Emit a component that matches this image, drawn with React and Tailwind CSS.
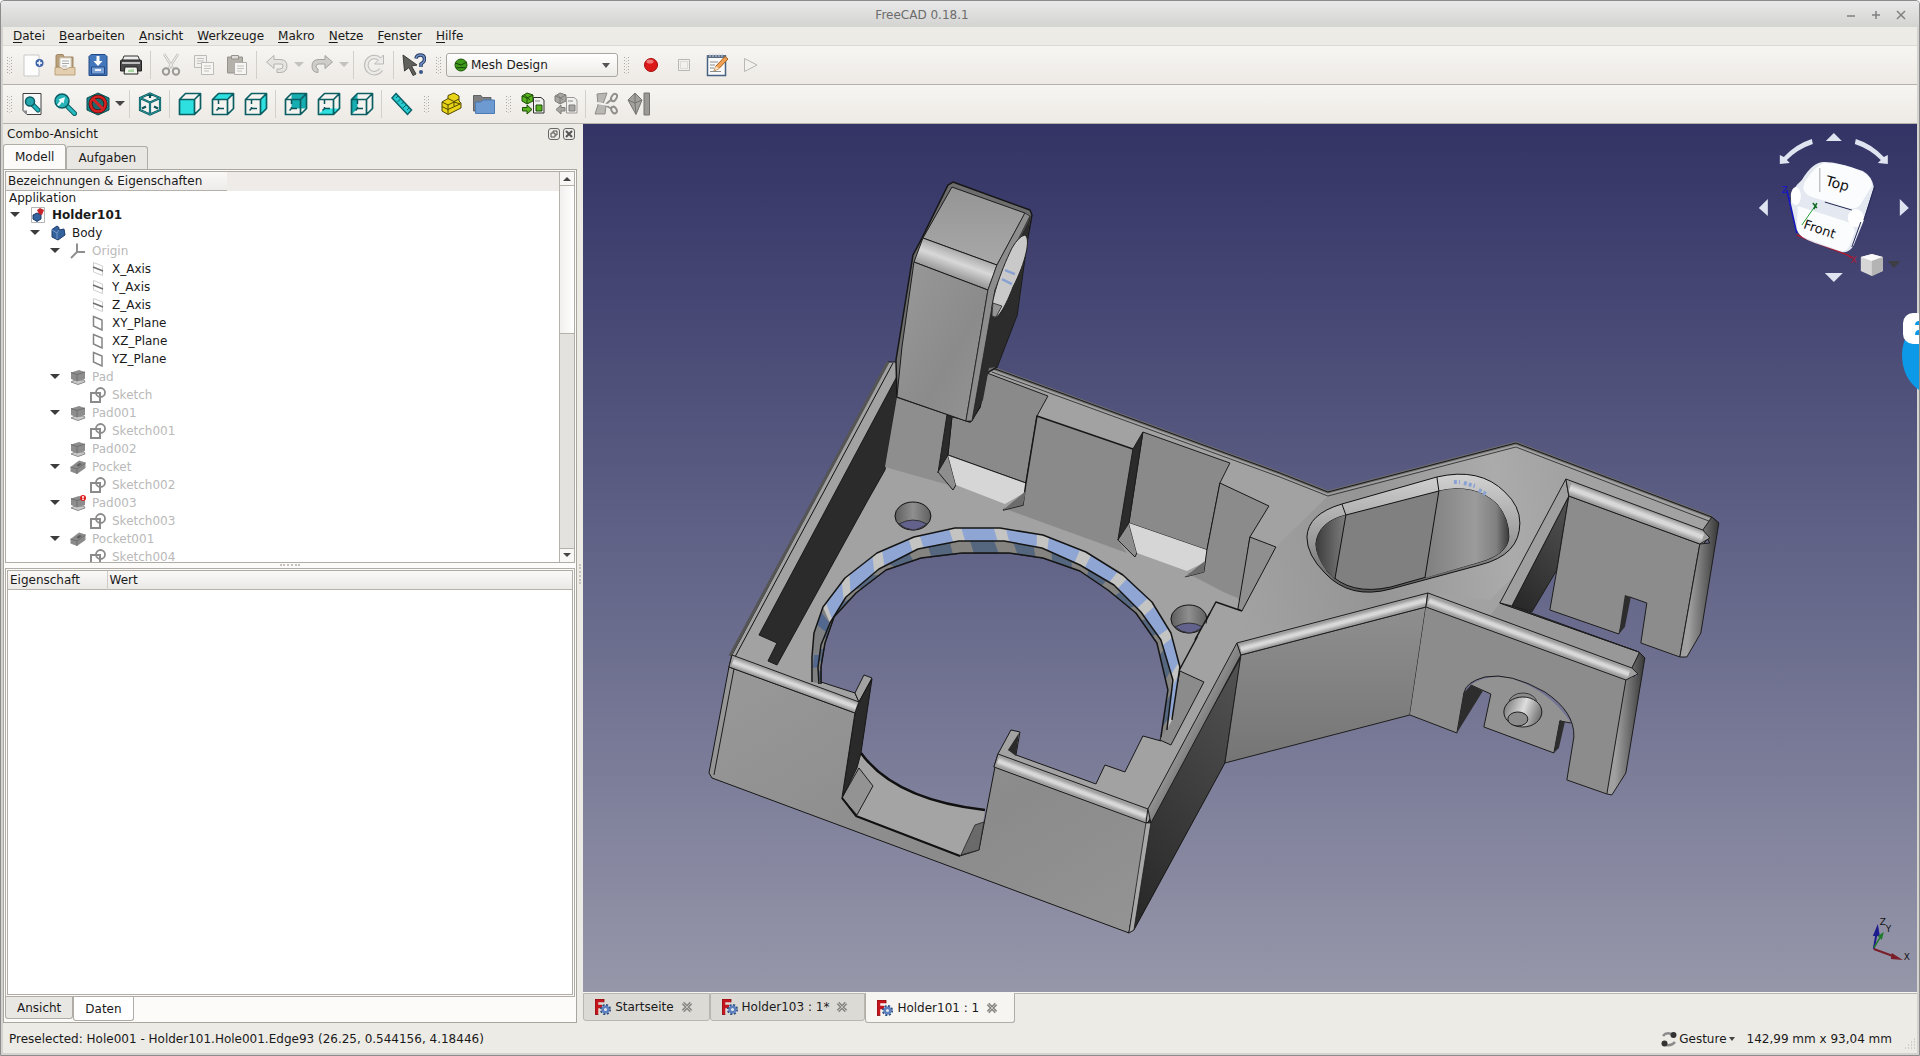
import React, { useState } from "react";

const MENUS = ["Datei", "Bearbeiten", "Ansicht", "Werkzeuge", "Makro", "Netze", "Fenster", "Hilfe"];

const TREE = [
  { level: 0, icon: "doc", label: "Holder101", open: true, bold: true },
  { level: 1, icon: "body", label: "Body", open: true },
  { level: 2, icon: "origin", label: "Origin", open: true, hidden: true },
  { level: 3, icon: "axis", label: "X_Axis" },
  { level: 3, icon: "axis", label: "Y_Axis" },
  { level: 3, icon: "axis", label: "Z_Axis" },
  { level: 3, icon: "plane", label: "XY_Plane" },
  { level: 3, icon: "plane", label: "XZ_Plane" },
  { level: 3, icon: "plane", label: "YZ_Plane" },
  { level: 2, icon: "pad", label: "Pad", open: true, hidden: true },
  { level: 3, icon: "sketch", label: "Sketch", hidden: true },
  { level: 2, icon: "pad", label: "Pad001", open: true, hidden: true },
  { level: 3, icon: "sketch", label: "Sketch001", hidden: true },
  { level: 2, icon: "pad", label: "Pad002", hidden: true },
  { level: 2, icon: "pocket", label: "Pocket", open: true, hidden: true },
  { level: 3, icon: "sketch", label: "Sketch002", hidden: true },
  { level: 2, icon: "padError", label: "Pad003", open: true, hidden: true },
  { level: 3, icon: "sketch", label: "Sketch003", hidden: true },
  { level: 2, icon: "pocket", label: "Pocket001", open: true, hidden: true },
  { level: 3, icon: "sketch", label: "Sketch004", hidden: true },
];

const INDENTS = ["pl-1", "pl-6", "pl-11", "pl-16"];

/* ---------- toolbar icons ---------- */

const Icon = ({ children, size = 24 }) => (
  <svg width={size} height={size} viewBox="0 0 24 24" fill="none" className="shrink-0" aria-hidden="true">
    {children}
  </svg>
);

const NewIcon = () => (
  <Icon>
    <path d="M4 2H19V23H4Z" fill="#fdfdfd" stroke="#c9c9c9" />
    <circle cx="19.500" cy="10" r="4" fill="#3b62a8" />
    <path d="M19.500 7.500V12.500M17 10H22" stroke="#fff" strokeWidth="1.500" />
  </Icon>
);

const OpenIcon = () => (
  <Icon>
    <path d="M3 14V3Q3 1.500 4.500 1.500H10L11 4H20V15Z" fill="#b8a07c" stroke="#9f8561" />
    <path d="M7 5H18V15H7Z" fill="#fafaf8" stroke="#d6d0c4" />
    <path d="M9 8H16M9 10.500H16M9 13H14" stroke="#a9a9a9" />
    <path d="M2 14.500H8L10 16.500H14L16 14.500H22V22H2Z" fill="#e3cfb0" stroke="#bda27b" />
  </Icon>
);

const SaveIcon = () => (
  <Icon>
    <path d="M5 1.500H19L21 3.500V22.500H3V3.500Z" fill="#4376bb" stroke="#234a86" />
    <path d="M5.500 14H18.500V21H5.500Z" fill="#78a0d6" stroke="#234a86" />
    <path d="M9 17H15" stroke="#e8eef7" strokeWidth="2" />
    <path d="M10.500 3H13.500V8H16.500L12 13L7.500 8H10.500Z" fill="#fff" />
  </Icon>
);

const PrintIcon = () => (
  <Icon>
    <path d="M5 3H19L21 8H3Z" fill="#eee" stroke="#333" />
    <path d="M1.500 8Q1.500 7 3 7H21Q22.500 7 22.500 8V18H1.500Z" fill="#4b4b4b" stroke="#222" />
    <path d="M3 9H21V11H3Z" fill="#bdbdbd" />
    <path d="M6 14H18L19 21H5Z" fill="#f1f5ee" stroke="#222" />
    <path d="M9 17L15 16V19H9Z" fill="#a9d6a3" />
  </Icon>
);

const CutIcon = () => (
  <Icon>
    <path d="M5 1L14.500 16M19 1L9.500 16" stroke="#c2c0bc" strokeWidth="2.500" />
    <path d="M5 1L14.500 16M19 1L9.500 16" stroke="#f4f3f1" />
    <circle cx="7" cy="18.500" r="3.200" stroke="#9b9a97" strokeWidth="2" />
    <circle cx="17" cy="18.500" r="3.200" stroke="#9b9a97" strokeWidth="2" />
  </Icon>
);

const CopyIcon = () => (
  <Icon>
    <path d="M2.500 2.500H14.500V14.500H2.500Z" fill="#f2f1ef" stroke="#bdbbb7" />
    <path d="M5 5.500H12M5 8H12M5 10.500H10" stroke="#c4c2be" />
    <path d="M9.500 9.500H21.500V21.500H9.500Z" fill="#f7f6f4" stroke="#bdbbb7" />
    <path d="M12 13H19M12 15.500H19M12 18H17" stroke="#c4c2be" />
  </Icon>
);

const PasteIcon = () => (
  <Icon>
    <path d="M2.500 4H17.500V20H2.500Z" fill="#b4b1ab" stroke="#96938d" />
    <path d="M6.500 2.500H13.500V6H6.500Z" fill="#dedcd8" stroke="#96938d" />
    <path d="M9.500 9.500H21.500V21.500H9.500Z" fill="#f7f6f4" stroke="#b0aeaa" />
    <path d="M12 13H19M12 15.500H19M12 18H17" stroke="#c4c2be" />
  </Icon>
);

const UndoIcon = () => (
  <Icon>
    <path d="M1.500 9L9 2.500V6.500H15Q22 6.500 22 13T15 19.500H12V16H15Q18 16 18 13T15 11H9V15.500Z" fill="#e6e4e1" stroke="#b5b3af" />
  </Icon>
);

const RedoIcon = () => (
  <Icon>
    <path d="M22.500 9L15 2.500V6.500H9Q2 6.500 2 13T8 19.500V16Q6 15 6 13T9 11H15V15.500Z" fill="#cfcdca" stroke="#a5a39f" />
  </Icon>
);

const RefreshIcon = () => (
  <Icon>
    <path d="M19 16.500A8 8 0 1 1 18 6.500" stroke="#bbb9b5" strokeWidth="4.500" />
    <path d="M21.500 2V11H12.500Z" fill="#ecebe9" stroke="#bbb9b5" />
    <path d="M19 16.500A8 8 0 1 1 18 6.500" stroke="#ecebe9" strokeWidth="2.500" />
  </Icon>
);

const WhatsThisIcon = () => (
  <Icon>
    <path d="M14 5.500Q14.500 2 18.500 2T22.500 6.500Q22.500 9 19 11V14" stroke="#27395e" strokeWidth="3.500" />
    <path d="M14 5.500Q14.500 2 18.500 2T22.500 6.500Q22.500 9 19 11V14" stroke="#6d8fc6" strokeWidth="1.500" />
    <circle cx="19" cy="19" r="2" fill="#3b5586" />
    <path d="M1 2L15 12L9.500 13L14 21L11 22.500L7 14.500L2.500 18Z" fill="#60605c" stroke="#3c3c3a" />
  </Icon>
);

const RecordIcon = () => (
  <Icon>
    <circle cx="12" cy="12" r="6.500" fill="#dc1a1a" stroke="#a30d0d" />
    <ellipse cx="11" cy="8.500" rx="3.500" ry="2" fill="#f07b7b" />
  </Icon>
);

const StopIcon = () => (
  <Icon>
    <path d="M6.500 6.500H17.500V17.500H6.500Z" fill="#f3f1ee" stroke="#b9b7b3" />
    <path d="M8.500 8.500H15.500V15.500H8.500Z" stroke="#dddbd7" />
  </Icon>
);

const EditIcon = () => (
  <Icon>
    <path d="M2.500 3H20.500V22.500H2.500Z" fill="#fafafa" stroke="#476182" strokeWidth="1.500" />
    <path d="M2 2H21V5H2Z" fill="#5a6d86" />
    <path d="M5 0.500V4M8 0.500V4M11 0.500V4M14 0.500V4M17 0.500V4" stroke="#c8d0da" />
    <path d="M5 9H13M5 12H10M5 15H9M5 18.500H16" stroke="#8c8c8c" />
    <path d="M9 18L11 13L20 3.500L23 6L14 15.500Z" fill="#efa054" stroke="#a5621f" />
    <path d="M9 18L11 13L14 15.500Z" fill="#f7e2c4" />
  </Icon>
);

const PlayIcon = () => (
  <Icon>
    <path d="M6.500 5.500L19 12L6.500 18.500Z" fill="#f3f1ee" stroke="#b9b7b3" />
  </Icon>
);

const FitAllIcon = () => (
  <Icon>
    <path d="M3 1.500H21V22.500H7L3 18.500Z" fill="#f9f9f9" stroke="#3f3f3f" />
    <path d="M3 18.500H7V22.500Z" fill="#8a8a8a" />
    <path d="M13 13L18 18" stroke="#0b5d63" strokeWidth="5" strokeLinecap="round" />
    <path d="M13 13L18 18" stroke="#21b6bb" strokeWidth="3" strokeLinecap="round" />
    <circle cx="10" cy="9.500" r="4.500" fill="#22a5ab" stroke="#0b5d63" strokeWidth="1.500" />
  </Icon>
);

const FitSelectionIcon = () => (
  <Icon>
    <path d="M14 14L21.500 21.500" stroke="#0b5d63" strokeWidth="5" strokeLinecap="round" />
    <path d="M14 14L21.500 21.500" stroke="#27bcc1" strokeWidth="3" strokeLinecap="round" />
    <circle cx="9" cy="9" r="7" fill="#25b3b8" stroke="#0b5d63" strokeWidth="1.500" />
    <path d="M4 13L7 9L5.500 7.500L12 5L10.500 11.500L9 10L6 14Z" fill="#eafcfc" />
  </Icon>
);

const DrawStyleIcon = () => (
  <Icon>
    <path d="M12 1L23 6V18L12 23L1 18V6Z" fill="#168488" stroke="#0a4d52" />
    <circle cx="12" cy="12" r="7.500" fill="#1a6a70" stroke="#4e0a0a" strokeWidth="4" />
    <circle cx="12" cy="12" r="7.500" stroke="#d42222" strokeWidth="2.500" />
    <path d="M7 7L17 17" stroke="#d42222" strokeWidth="3" />
  </Icon>
);

const IsoIcon = () => (
  <Icon>
    <path d="M12 1.500L22 6V18L12 22.500L2 18V6Z" fill="#f4f3f0" />
    <path d="M12 1.500L22 6V18L12 22.500L2 18V6Z M2 6L12 10.500L22 6M12 10.500V22.500M12 2V6M4 16.500L8 14.500M20 16.500L16 14.500" stroke="#0b5358" strokeWidth="2.200" />
    <path d="M12 1.500L22 6V18L12 22.500L2 18V6Z M2 6L12 10.500L22 6M12 10.500V22.500" stroke="#2fa9ad" strokeWidth="0.800" />
  </Icon>
);

const FACES = {
  front: "M1.500 7.500H16.500V22.500H1.500Z",
  top: "M1.500 7.500L7.500 1.500H22.500L16.500 7.500Z",
  right: "M16.500 7.500L22.500 1.500V16.500L16.500 22.500Z",
  rear: "M7.500 1.500H22.500V16.500H7.500Z",
  bottom: "M1.500 22.500L7.500 16.500H22.500L16.500 22.500Z",
  left: "M1.500 7.500L7.500 1.500V16.500L1.500 22.500Z",
};

const CubeIcon = ({ face }) => (
  <Icon>
    <path d="M1.500 7.500L7.500 1.500H22.500V16.500L16.500 22.500H1.500Z" fill="#f4f3f0" />
    <path d={FACES[face]} fill={face === "left" || face === "rear" ? "#17aeb2" : "#2ee0e0"} />
    {face !== "front" && (
      <path d="M7.500 8V12M7.500 15V16.500L5.500 18.500M8 16.500H13" stroke="#0b5358" strokeWidth="1.500" />
    )}
    <path
      d="M1.500 7.500L7.500 1.500H22.500V16.500L16.500 22.500H1.500ZH16.500V22.500M16.500 7.500L22.500 1.500"
      stroke="#0b5f63"
      strokeWidth="1.700"
      strokeLinejoin="round"
    />
  </Icon>
);

const RulerIcon = () => (
  <Icon>
    <path d="M6 1.500L21.500 18L17.500 22.500L2 6Z" fill="#27cbd0" stroke="#0b6368" strokeWidth="1.500" />
    <path d="M8 4L6 6M10.500 7L7.500 10M13.500 10L11.500 12M16 13L13 16M19 16L17 18" stroke="#0b6368" />
  </Icon>
);

const PartIcon = () => (
  <Icon>
    <path d="M3 10L9 6.500V3.500L15 1L20 4V9L22 11V16L9 22.500L3 19Z" fill="#ead417" stroke="#4f4600" />
    <path d="M3 10L9 13V22M9 13L15 10L21.500 12M9 6.500L15 9.500V14M15 9.500L20 7M3 14.500L9 17.500L21 12" stroke="#4f4600" />
  </Icon>
);

const FolderIcon = () => (
  <Icon>
    <path d="M1.500 19V3.500H9L10.500 5.500H19V19Z" fill="#7d7f80" stroke="#616364" />
    <path d="M3.500 21.500V10H9L11 8H22.500V21.500Z" fill="#6d9bd1" stroke="#4b7ab4" />
  </Icon>
);

const MeshConvertIcon = ({ gray }) => {
  const fill = gray ? "#a9a7a4" : "#58b31e";
  const line = gray ? "#7f7d7a" : "#1d4d0a";
  return (
    <Icon>
      <path d="M1 4L6 1L12 3V9L6 12L1 9Z" fill={fill} stroke={line} />
      <path d="M1 4L6 6L12 3M6 6V12M3 2.500L9 8" stroke={line} />
      <path d="M12.500 5.500H20L23 8V21H12.500Z" fill="#f1f1ef" stroke={gray ? "#9b9997" : "#333"} />
      <path d="M14 9H19" stroke="#888" />
      <path d="M15 13H21V19H15Z" fill={fill} stroke={line} />
      {gray ? (
        <path d="M11 15.500H7V13L2 17.500L7 22V19H11Z" fill={fill} stroke={line} />
      ) : (
        <path d="M1.500 15.500H6V13L11 17.500L6 22V19H1.500Z" fill={fill} stroke={line} />
      )}
    </Icon>
  );
};

const MeshCutIcon = () => (
  <Icon>
    <path d="M3 2L13 1L9 12L12 14L11 22H1L4 13Z" fill="#b9b7b4" stroke="#8f8d8a" />
    <path d="M11 13L18 7M11 13L18 17" stroke="#92908d" strokeWidth="2" />
    <ellipse cx="20" cy="5.500" rx="2.500" ry="4" transform="rotate(30 20 5.500)" stroke="#92908d" strokeWidth="2" />
    <ellipse cx="20" cy="18" rx="2.500" ry="3.500" transform="rotate(-30 20 18)" stroke="#92908d" strokeWidth="2" />
    <path d="M3 11L14 13" stroke="#f2f1ef" strokeWidth="2" />
  </Icon>
);

const MeshPlaneIcon = () => (
  <Icon>
    <path d="M1 8L8 1L15 8L9 22.500Z" fill="#a3a19e" stroke="#757370" />
    <path d="M1 8L8 11L15 8M8 1V11L9 22M1 8" stroke="#757370" />
    <path d="M17 1H22.500V23H17Z" fill="#9b9996" stroke="#757370" />
  </Icon>
);

/* ---------- tree icons ---------- */

const TreeIcon = ({ name }) => (
  <svg width="16" height="16" viewBox="0 0 16 16" fill="none" className="shrink-0" aria-hidden="true">
    {name === "doc" && (
      <>
        <path d="M1.500 0.500H14.500V15.500H1.500Z" fill="#fff" stroke="#b5b5b5" />
        <path d="M3 8L7 6L11 7.500V12L7 14.500L3 12Z" fill="#34639e" stroke="#1d3b66" />
        <path d="M7 3L10 1L14 3L12 8L9 7Z" fill="#c8242b" />
      </>
    )}
    {name === "body" && (
      <>
        <path d="M2 4.500L7 1L9 2.500V5L14 4L15 10L8 15L2 12Z" fill="#33629d" stroke="#1c3c6b" />
        <path d="M2 5L7 8V14M7 8L9 5" stroke="#7197c9" />
      </>
    )}
    {name === "origin" && <path d="M7 0.500V9H15M7 9L1 15" stroke="#8f8f8f" strokeWidth="2" />}
    {name === "axis" && (
      <>
        <path d="M3.500 1.500L12.500 5V14.500L3.500 11Z" stroke="#cfcfcf" />
        <path d="M3 6L13 10" stroke="#6f6f6f" strokeWidth="1.500" />
      </>
    )}
    {name === "plane" && <path d="M3.500 1.500L12 5V15L3.500 11Z" stroke="#858585" strokeWidth="1.500" />}
    {(name === "pad" || name === "padError") && (
      <>
        <path d="M1 13L5 11H14L15 13L8 15.500Z" fill="#c9c9c9" stroke="#8c8c8c" />
        <path d="M1 3.500L9 1L15 3V10L7 12.500L1 10Z" fill="#8d8d8d" />
        <path d="M1 3.500L7 5.500L15 3M7 5.500V12" stroke="#6f6f6f" />
      </>
    )}
    {name === "padError" && (
      <>
        <circle cx="13" cy="3" r="3" fill="#e02020" />
        <path d="M13 1V3.500M13 4V5" stroke="#fff" strokeWidth="1.500" />
      </>
    )}
    {name === "pocket" && (
      <>
        <path d="M0.500 8L9 1.500L15.500 3.500V9L7 15L0.500 12.500Z" fill="#8b8b8b" />
        <path d="M0.500 8L7 10L15.500 4M7 10V15" stroke="#707070" />
        <path d="M6 6.500L9.500 4L12 5L8.500 7.500Z" fill="#5d5d5d" />
      </>
    )}
    {name === "sketch" && (
      <>
        <path d="M1 6H10V15H1Z" stroke="#8b8b8b" strokeWidth="2" />
        <circle cx="10.500" cy="5.500" r="4.500" stroke="#8b8b8b" strokeWidth="1.800" />
      </>
    )}
  </svg>
);

const DocTabIcon = () => (
  <svg width="16" height="16" viewBox="0 0 16 16" fill="none" className="shrink-0" aria-hidden="true">
    <path d="M1.500 0V15.500M0 1.500H9M3 7.500H7" stroke="#c4161c" strokeWidth="3.500" />
    <path d="M0 0H9V3.300M0 0V15.500H3.300" stroke="#7a0d11" strokeWidth="0.800" />
    <circle cx="10.500" cy="10.500" r="4.300" stroke="#2d4c80" strokeWidth="2.500" strokeDasharray="1.900 1.480" />
    <circle cx="10.500" cy="10.500" r="2.800" fill="#dfe5f0" stroke="#5b80bd" strokeWidth="2.500" />
  </svg>
);

const CloseX = () => (
  <svg width="12" height="12" viewBox="0 0 12 12" className="shrink-0" aria-hidden="true">
    <path d="M2 2L10 10M10 2L2 10" stroke="#8b8985" strokeWidth="3.500" />
    <path d="M2 2L10 10M10 2L2 10" stroke="#c3c1bd" strokeWidth="1" />
  </svg>
);

/* ---------- toolbar parts ---------- */

const ToolButton = ({ label, children }) => (
  <button aria-label={label} className="flex h-8 w-[33px] items-center justify-center hover:bg-white">
    {children}
  </button>
);

const Caret = ({ dim, label }) => (
  <button aria-label={label} className="flex h-8 w-3 items-center justify-center">
    <svg width="10" height="6" viewBox="0 0 10 6" aria-hidden="true">
      <path d="M0 0H10L5 5Z" fill={dim ? "#c4c2bd" : "#474747"} />
    </svg>
  </button>
);

const Sep = () => (
  <div className="flex w-[7px] justify-center">
    <div className="h-7 w-px bg-[#d3d0ca]" />
  </div>
);

const Handle = ({ first }) => (
  <div className={first ? "flex w-3 shrink-0 justify-center" : "flex w-4 shrink-0 justify-center"}>
    <svg width="6" height="18" viewBox="0 0 6 18" aria-hidden="true">
      <path d="M1.500 1V18M5.500 1V18" stroke="#aaa8a3" strokeDasharray="1 2" />
      <path d="M3.500 2V18" stroke="#c9c7c2" strokeDasharray="1 2" />
    </svg>
  </div>
);

/* ---------- 3D view ---------- */

// vertices of the ring round the big bore: outer, middle and inner edge
const RING_OUTER = [[812, 682], [812, 657], [814, 633], [823, 607], [845, 578], [877, 553], [914, 537], [955, 528], [1000, 528], [1043, 535], [1086, 552], [1123, 575], [1152, 602], [1171, 633], [1180, 667], [1172, 720]];
const RING_MIDDLE = [[819, 684], [818, 667], [821, 645], [830, 623], [846, 597], [879, 569], [918, 549], [959, 541], [1004, 541], [1042, 548], [1080, 565], [1114, 585], [1141, 612], [1161, 640], [1173, 680], [1167, 730]];
const RING_INNER = [[821, 684], [821, 667], [825, 643], [834, 617], [856, 593], [886, 570], [921, 558], [962, 553], [1009, 553], [1043, 558], [1080, 571], [1108, 590], [1136, 613], [1157, 643], [1168, 690], [1161, 737]];

const toPoints = (list) => list.map((p) => p.join(",")).join(" ");
const between = (a, b, t) => [a[0] + (b[0] - a[0]) * t, a[1] + (b[1] - a[1]) * t];

const RingCells = ({ from, to, start, end, fill }) =>
  from.slice(0, -1).map((p, i) => (
    <polygon
      key={i}
      fill={fill}
      points={toPoints([
        between(p, from[i + 1], start),
        between(p, from[i + 1], end),
        between(to[i], to[i + 1], end),
        between(to[i], to[i + 1], start),
      ])}
    />
  ));

// rounded edge: the strip itself, then a highlight that runs along its middle
const RoundedEdge = ({ strip, middle, width = 4 }) => (
  <>
    <path d={strip} fill="#a0a0a0" />
    <path d={middle} stroke="#b4b4b4" strokeWidth={width * 2} />
    <path d={middle} stroke="#c6c6c6" strokeWidth={width * 1.4} />
    <path d={middle} stroke="#d8d8d8" strokeWidth={width * 0.8} />
    <path d={strip} stroke="#1d1d1d" />
  </>
);

const Model = () => (
  <g strokeLinejoin="round">
    {/* top faces of frame and arms */}
    <path
      d="M888 362L902 362L990 367L1280 473L1328 492L1516 443L1712 517L1719 523L1703 545L1566 496L1512 606L1639 652L1645 658L1632 680L1428 607L1241 655L1148 823L994 767L998 754L1011 730L1020 732L1016 755L1096 784L1105 765L1125 772L1143 736L1161 741L1169 700L1166 667L1157 643L1136 613L1108 590L1080 571L1043 558L1009 553L962 553L921 558L886 570L856 593L834 617L825 643L821 667L821 682L855 693L859 702L855 713L729 667L732 655Z"
      fill="#a2a2a2"
      stroke="#171717"
    />
    <path d="M1330 494L1516 447L1600 480L1530 560L1490 600L1428 593L1240 640L1216 602L1276 547Z" fill="url(#armTop)" />
    <path d="M990 367L1280 473L1328 492L1516 443L1712 517" stroke="#6d6d6d" strokeWidth="3" fill="none" />
    <path d="M990 367L1280 473L1328 492L1516 443L1712 517" stroke="#191919" fill="none" />
    <path d="M992 372L1280 477L1328 496L1516 447L1709 521" stroke="#222" strokeWidth="0.800" fill="none" />
    <path d="M888 362L730 656" stroke="#555" strokeWidth="3" fill="none" />
    <path d="M893 363L735 657" stroke="#111" fill="none" />

    {/* inner left wall */}
    <path d="M902 367L897 397L885 470L868 500L777 665L768 661L777 643L759 635Z" fill="#2b2b2b" stroke="#1a1a1a" />

    {/* back wall with its pockets */}
    <path d="M897 397L947 415L937 473L956 487L885 467Z" fill="#8e8e8e" />
    <path d="M987 373L1048 396L1037 416L1026 483L948 455L952 417L972 421L980 407Z" fill="#8a8a8a" stroke="#1d1d1d" />
    <path d="M947 415L952 417L948 455L938 473Z" fill="#2b2b2b" stroke="#1d1d1d" />
    <path d="M938 472L948 455L956 485L953 490Z" fill="#8e8e8e" stroke="#1d1d1d" />
    <path d="M948 455L1026 483L1024 493L1005 504L956 485Z" fill="#d6d6d6" />
    <path d="M948 455L1026 483" stroke="#1d1d1d" />
    <path d="M1037 416L1133 449L1125 513L1118 540L1127 553L1003 508L1023 505Z" fill="#8a8a8a" />
    <path d="M1003 510L1023 505L1026 483L1037 416L1133 449" stroke="#171717" strokeWidth="1.500" fill="none" />
    <path d="M1026 491L1023 505L1003 510Z" fill="#6c6c6c" />
    <path d="M1143 432L1230 463L1220 483L1207 550L1129 523Z" fill="#8a8a8a" stroke="#1d1d1d" />
    <path d="M1143 432L1133 449L1118 540L1129 523Z" fill="#2b2b2b" stroke="#1d1d1d" />
    <path d="M1118 540L1129 523L1137 553L1135 557Z" fill="#8e8e8e" stroke="#1d1d1d" />
    <path d="M1129 523L1207 550L1205 562L1187 571L1137 553Z" fill="#d6d6d6" />
    <path d="M1220 483L1269 506L1250 537L1239 600L1187 573L1204 572L1207 550Z" fill="#8b8b8b" />
    <path d="M1185 577L1204 572L1207 550L1220 483L1269 506L1250 537L1239 610" stroke="#171717" fill="none" />
    <path d="M1205 561L1204 572L1185 577Z" fill="#6c6c6c" />
    <path d="M1185 577L1238 598L1237 607L1190 590Z" fill="#a2a2a2" />
    <path d="M1250 537L1276 547L1242 611L1238 609Z" fill="#8f8f8f" stroke="#171717" />
    <path d="M1242 611L1216 602L1180 669" stroke="#171717" strokeWidth="1.500" fill="none" />
    <path d="M1180 671L1204 682L1171 745L1160 740L1174 700Z" fill="#8b8b8b" stroke="#171717" />

    {/* ring */}
    <polygon points={toPoints([...RING_OUTER, ...[...RING_MIDDLE].reverse()])} fill="#c4c4c2" />
    <polygon points={toPoints([...RING_MIDDLE, ...[...RING_INNER].reverse()])} fill="#858480" />
    <RingCells from={RING_OUTER} to={RING_MIDDLE} start={0.14} end={0.86} fill="#8fa6d4" />
    <RingCells from={RING_MIDDLE} to={RING_INNER} start={0.25} end={0.78} fill="#55667f" />
    <path d="M819 684L818 667L821 645L830 623L823 607L814 633L812 657L812 682Z" fill="#7f8082" />
    <path d="M814 655L819 655L818 667L813 668ZM817 625L826 632L829 622L821 612Z" fill="#53688f" />
    <polyline points={toPoints(RING_OUTER)} fill="none" stroke="#151515" strokeWidth="1.500" />
    <polyline points={toPoints(RING_MIDDLE)} fill="none" stroke="#151515" strokeWidth="1.500" />
    <polyline points={toPoints(RING_INNER)} fill="none" stroke="#151515" strokeWidth="1.500" />

    {/* screw holes */}
    {[[913, 516], [1189, 619]].map(([x, y]) => (
      <g key={x}>
        <ellipse cx={x} cy={y} rx="18" ry="14" fill="url(#bore)" stroke="#111" />
        <path d={`M${x - 14} ${y + 8}Q${x} ${y} ${x + 14} ${y + 8}Q${x + 5} ${y + 14} ${x} ${y + 14}Q${x - 8} ${y + 13} ${x - 14} ${y + 8}Z`} fill="#62628c" stroke="#222" strokeWidth="0.800" />
      </g>
    ))}
    <path d="M1205 622L1197 637L1210 632Z" fill="#a2a2a2" />
    <path d="M1210 613L1195 640" stroke="#171717" strokeWidth="1.500" />

    {/* tower */}
    <path d="M953 182L1030 210L1032 215L1027 242L1017 315L997 367L987 373L980 407L970 422L897 397L896 360L913 255L922 238L948 185Z" fill="#6e6e6e" stroke="#161616" strokeWidth="1.500" />
    <path d="M1031 214L1017 315L997 367L989 368L983 400L972 421L980 350L995 288L1005 267L1028 222Z" fill="#2c2c2c" />
    <path d="M952 187L1025 213L997 265L923 238Z" fill="url(#towerTop)" stroke="#1c1c1c" />
    <path d="M923 238L997 265L988 290L914 262Z" fill="url(#towerEdge)" stroke="#1c1c1c" />
    <path d="M914 262L988 290L966 421L897 397L902 347Z" fill="url(#front)" stroke="#1c1c1c" />
    <path d="M1025 213L1030 216L1004 268L995 290L972 421L966 421L988 290L997 265Z" fill="#8d8d8d" stroke="#222" strokeWidth="0.800" />
    <path d="M1025 235C1031 238 1026 262 1013 287C1005 308 996 323 992 316C990 302 1000 273 1012 248Q1019 236 1025 235Z" fill="#c9c9c9" stroke="#222" />
    <path d="M1002 279L1012 284M1005 270L1015 274" stroke="#8aa2d2" strokeWidth="2.500" />
    <path d="M993 303L1002 306L996 317L992 316Z" fill="#949494" stroke="#222" strokeWidth="0.800" />

    {/* front notch */}
    <path d="M861 753Q895 800 985 810L983 823L960 856L856 816L842 798Z" fill="#a4a4a4" />
    <path d="M861 753Q895 800 985 810" stroke="#101010" strokeWidth="2.500" fill="none" />
    <path d="M859 768L873 786L857 815L842 798Z" fill="#939393" stroke="#1d1d1d" />
    <path d="M864 675L872 678L859 702L855 693Z" fill="#a2a2a2" stroke="#171717" />
    <path d="M872 679L861 753L857 768L842 798L855 713L859 702Z" fill="#2a2a2a" stroke="#171717" />
    <path d="M1019 733L1016 756L1008 750Z" fill="#2a2a2a" />

    {/* front face and its rounded edges */}
    <path d="M729 667L855 713L842 798L856 816L960 856L979 850L995 767L1148 823L1129 933L712 778L709 773Z" fill="url(#front)" stroke="#171717" />
    <path d="M984 822L979 850L961 855L975 825Z" fill="#6a6a6a" stroke="#222" strokeWidth="0.800" />
    <path d="M842 798L856 816L960 856" stroke="#111" strokeWidth="2" fill="none" />
    <RoundedEdge strip="M732 655L859 702L855 713L729 667Z" middle="M733 662L856 707" />
    <RoundedEdge strip="M998 754L1148 809L1146 823L994 767Z" middle="M998 761L1146 816" />
    <path d="M734 669L714 775" stroke="#1d1d1d" />

    {/* dark right side */}
    <path d="M1148 823L1241 657L1225 763L1134 930L1129 933Z" fill="url(#darkSide)" stroke="#171717" />
    <path d="M1148 809L1237 643L1241 655L1151 823Z" fill="url(#sideFillet)" stroke="#1d1d1d" />
    <path d="M1146 823L1151 823L1134 930L1129 933Z" fill="#a8a8a8" stroke="#1d1d1d" strokeWidth="0.800" />

    {/* front arm */}
    <path d="M1241 655L1426 607L1410 715L1225 763Z" fill="url(#armFace)" stroke="#1d1d1d" />
    <path
      d="M1426 607L1626 680L1607 794L1567 780L1574 737Q1575 712 1545 692Q1510 672 1485 677Q1466 682 1464 693L1457 733L1410 715Z"
      fill="#8c8c8c"
    />
    <path d="M1471 685Q1485 674 1510 678Q1550 690 1571 723L1560 721L1554 753L1484 727L1491 694Z" fill="#929292" />
    <path d="M1571 723L1560 721L1554 753L1484 727L1491 694L1471 685" fill="none" stroke="#1d1d1d" />
    <path d="M1410 715L1457 733L1464 693Q1466 682 1485 677Q1510 672 1545 692Q1575 712 1574 737L1567 780L1607 794" stroke="#1d1d1d" fill="none" />
    <path d="M1464 693L1471 685L1483 691L1457 733Z" fill="#2d2d2d" />
    <path d="M1560 720L1565 722L1559 748L1554 753Z" fill="#2d2d2d" />
    <ellipse cx="1523" cy="703" rx="14" ry="10" fill="#8b8b8b" stroke="#3a3a3a" />
    <ellipse cx="1523" cy="712" rx="19" ry="15" fill="url(#boss)" stroke="#1d1d1d" />
    <ellipse cx="1518" cy="719" rx="10" ry="7" fill="#8c8c8c" stroke="#1d1d1d" />
    <path d="M1500 603L1639 652L1632 668L1490 616Z" fill="#989898" />
    <path d="M1639 652L1645 658L1626 773L1612 795L1607 794L1626 680L1637 676L1632 668Z" fill="url(#armEnd)" />
    <path d="M1500 603L1639 652L1645 658L1626 773L1612 795L1607 794L1626 680M1632 668L1640 652" fill="none" stroke="#1d1d1d" />
    <RoundedEdge strip="M1237 643L1428 593L1426 607L1241 655Z" middle="M1241 649L1427 600" />
    <RoundedEdge strip="M1428 593L1632 668L1638 674L1626 680L1426 607Z" middle="M1429 601L1629 674" />

    {/* rear arm */}
    <path d="M1569 496L1512 606L1532 612L1557 570Z" fill="url(#darkSide)" stroke="#1d1d1d" />
    <path d="M1566 479L1500 603L1512 606L1569 496Z" fill="#9f9f9f" stroke="#1d1d1d" />
    <path d="M1569 496L1700 544L1680 657L1641 643L1647 603L1630 597L1619 634L1550 610L1557 570Z" fill="#8c8c8c" stroke="#1d1d1d" />
    <path d="M1625 595L1631 597L1625 627L1619 634Z" fill="#2d2d2d" />
    <path d="M1700 544L1710 543L1703 530L1712 517L1719 523L1701 633L1687 657L1680 657Z" fill="url(#armEnd)" stroke="#1d1d1d" />
    <RoundedEdge strip="M1566 479L1703 530L1710 538L1700 544L1569 496Z" middle="M1570 488L1703 537" width={5} />
    <path d="M1500 603L1639 652" stroke="#1d1d1d" />

    {/* oval opening */}
    <path d="M1342 504L1437 477Q1480 467 1505 492Q1520 506 1520 523Q1520 555 1480 565L1391 589Q1350 600 1325 573Q1307 555 1307 537Q1308 514 1342 504Z" fill="url(#ovalRim)" stroke="#111" />
    <path d="M1346 515L1439 491Q1475 483 1497 504Q1509 518 1509 537Q1508 554 1480 562L1391 587Q1350 596 1328 572Q1316 555 1316 544Q1318 522 1346 515Z" fill="#808080" stroke="#111" />
    <path d="M1346 515L1335 579Q1316 562 1316 544Q1318 522 1346 515Z" fill="url(#ovalLeft)" />
    <path d="M1439 491Q1475 483 1497 504Q1509 518 1509 537Q1508 554 1480 562L1425 578Z" fill="url(#ovalRight)" />
    <path d="M1346 515L1335 579M1439 491L1425 578M1437 477L1439 491M1342 504L1346 515" stroke="#111" />
    <path d="M1454 482H1460M1464 483L1475 486M1479 490L1486 494" stroke="#8aa2d2" strokeWidth="4" strokeDasharray="3 2" />
  </g>
);

const NavigationCube = () => (
  <g>
    <g fill="#dfe4f0">
      <path d="M1826 141L1834 133L1842 141ZM1825 273H1843L1834 282ZM1768 199V216L1759 208ZM1900 199V216L1909 208Z" />
      <path d="M1812 139L1813 144Q1798 149 1787 160L1790 163L1780 164L1780 155L1784 157Q1796 144 1812 139Z" />
      <path d="M1856 139L1855 144Q1870 149 1881 160L1878 163L1888 164L1888 155L1884 157Q1872 144 1856 139Z" />
    </g>
    <path d="M1797 233L1787 190" stroke="#1414c8" strokeWidth="1.500" />
    <path d="M1797 235L1848 255L1852 258" stroke="#b01830" strokeWidth="1.500" />
    <path d="M1823 162Q1835 161 1863 171Q1872 176 1874 187L1863 223L1854 245Q1850 253 1842 252L1815 243Q1800 238 1797 230L1791 203Q1790 190 1802 180Q1812 163 1823 162Z" fill="#e3e8f1" />
    <path d="M1824 163Q1843 163 1863 172Q1873 178 1872 186L1861 204Q1857 210 1848 208L1812 197Q1800 192 1805 182Q1815 166 1824 163Z" fill="#fbfcfd" />
    <path d="M1798 206L1845 221Q1855 224 1855 232L1849 247Q1845 253 1838 250L1803 237Q1797 233 1797 224Z" fill="#fbfcfd" />
    <ellipse cx="1796" cy="196" rx="5" ry="9" fill="#fff" />
    <ellipse cx="1856" cy="218" rx="8" ry="9" fill="#fff" />
    <path d="M1875 186L1864 220M1861 222L1852 247M1825 202L1852 210" stroke="#252a55" />
    <path d="M1820 168V192" stroke="#a9a9ad" />
    <path d="M1802 225L1816 205" stroke="#25a03a" />
    <path d="M1813 203L1817 208M1817 203L1814 209" stroke="#0e6b1e" strokeWidth="1.500" />
    <text x="1825" y="185" transform="rotate(16 1825 185)" fontSize="14" fill="#111">Top</text>
    <text x="1803" y="228" transform="rotate(19 1803 228)" fontSize="13" fill="#111">Front</text>
    <text x="1782" y="193" fontSize="9" fill="#1414c8">Z</text>
    <text x="1851" y="263" fontSize="9" fill="#b01830">X</text>
    <path d="M1861 257L1872 254L1883 257V271L1872 276L1861 271Z" fill="#d6d6d6" />
    <path d="M1861 257L1872 254L1883 257L1872 261Z" fill="#fafafa" />
    <path d="M1872 261L1883 257V271L1872 276Z" fill="#b4b4b4" />
    <path d="M1888 261H1901L1894 268Z" fill="#3e3e44" />
  </g>
);

const AxisCross = () => (
  <g>
    <path d="M1874 949L1877 932" stroke="#1c1c8c" strokeWidth="2" />
    <path d="M1873 936L1878 924L1880 936Z" fill="#1c1c8c" />
    <path d="M1874 948L1880 938" stroke="#1f7a2a" strokeWidth="1.500" />
    <path d="M1878 936L1884 932L1882 940Z" fill="#1f7a2a" />
    <path d="M1874 949L1893 956" stroke="#7a1f2a" strokeWidth="2" />
    <path d="M1892 953L1903 960L1891 959Z" fill="#7a1f2a" />
    <text x="1880" y="925" fontSize="9" fill="#111">Z</text>
    <text x="1886" y="932" fontSize="9" fill="#111">Y</text>
    <text x="1904" y="960" fontSize="9" fill="#111">X</text>
  </g>
);

const View3D = () => (
  <svg viewBox="583 124 1334 868" preserveAspectRatio="xMidYMid meet" fill="none" className="absolute inset-0 h-full w-full" role="img" aria-label="Holder101">
    <defs>
      <linearGradient id="towerEdge" gradientUnits="userSpaceOnUse" x1="960" y1="251" x2="951" y2="276">
        <stop offset="0" stopColor="#a8a8a8" />
        <stop offset="0.450" stopColor="#d8d8d8" />
        <stop offset="1" stopColor="#959595" />
      </linearGradient>
      <linearGradient id="armTop" gradientUnits="userSpaceOnUse" x1="1230" y1="560" x2="1570" y2="500">
        <stop offset="0" stopColor="#a2a2a2" />
        <stop offset="0.400" stopColor="#959595" />
        <stop offset="0.800" stopColor="#ababab" />
        <stop offset="1" stopColor="#a2a2a2" />
      </linearGradient>
      <linearGradient id="sideFillet" x1="0.400" y1="0.400" x2="0.600" y2="0.600">
        <stop offset="0" stopColor="#a5a5a5" />
        <stop offset="1" stopColor="#686868" />
      </linearGradient>
      <linearGradient id="front" x1="0" y1="0" x2="1" y2="1">
        <stop offset="0" stopColor="#999" />
        <stop offset="0.600" stopColor="#8b8b8b" />
        <stop offset="1" stopColor="#949494" />
      </linearGradient>
      <linearGradient id="towerTop" x1="0" y1="0" x2="0" y2="1">
        <stop offset="0" stopColor="#959595" />
        <stop offset="1" stopColor="#a8a8a8" />
      </linearGradient>
      <linearGradient id="armFace" x1="0.500" y1="0" x2="0.500" y2="1">
        <stop offset="0" stopColor="#8f8f8f" />
        <stop offset="1" stopColor="#757575" />
      </linearGradient>
      <linearGradient id="armEnd" x1="0" y1="0.450" x2="1" y2="0.550">
        <stop offset="0.250" stopColor="#a0a0a0" />
        <stop offset="0.600" stopColor="#6c6c6c" />
        <stop offset="1" stopColor="#303030" />
      </linearGradient>
      <linearGradient id="darkSide" x1="0.800" y1="0" x2="0.300" y2="1">
        <stop offset="0" stopColor="#505050" />
        <stop offset="1" stopColor="#2a2a2a" />
      </linearGradient>
      <linearGradient id="bore" x1="0" y1="0" x2="1" y2="0">
        <stop offset="0" stopColor="#5e5e5e" />
        <stop offset="0.500" stopColor="#8f8f8f" />
        <stop offset="1" stopColor="#5f5f5f" />
      </linearGradient>
      <linearGradient id="boss" x1="0" y1="0.300" x2="1" y2="0.600">
        <stop offset="0" stopColor="#7c7c7c" />
        <stop offset="0.500" stopColor="#dedede" />
        <stop offset="1" stopColor="#6c6c6c" />
      </linearGradient>
      <linearGradient id="ovalRim" x1="0" y1="0" x2="0" y2="1">
        <stop offset="0" stopColor="#d2d2d2" />
        <stop offset="0.600" stopColor="#969696" />
        <stop offset="1" stopColor="#555" />
      </linearGradient>
      <linearGradient id="ovalLeft" x1="0" y1="0" x2="1" y2="0">
        <stop offset="0" stopColor="#3c3c3c" />
        <stop offset="1" stopColor="#7e7e7e" />
      </linearGradient>
      <linearGradient id="ovalRight" x1="0" y1="0" x2="1" y2="0">
        <stop offset="0" stopColor="#7f7f7f" />
        <stop offset="0.600" stopColor="#9b9b9b" />
        <stop offset="0.850" stopColor="#808080" />
        <stop offset="1" stopColor="#3a3a3a" />
      </linearGradient>
    </defs>
    <Model />
    <NavigationCube />
    <AxisCross />
  </svg>
);

/* ---------- window parts ---------- */

const TitleBar = () => (
  <header className="flex h-[26px] shrink-0 items-center bg-linear-to-b from-[#e9e9e9] to-[#d3d3d2] pt-0.5 pr-1.5 text-[#6c6c6c]">
    <h1 className="flex-1 pl-1 text-center text-[12px] leading-4">FreeCAD 0.18.1</h1>
    <div className="flex gap-px">
      {["Minimieren", "Maximieren", "Schließen"].map((label, i) => (
        <button key={label} aria-label={label} className="flex h-5 w-6 items-center justify-center">
          <svg width="10" height="10" viewBox="0 0 10 10" stroke="#808080" strokeWidth="1.500" aria-hidden="true">
            {i === 0 && <path d="M1 6H9" />}
            {i === 1 && <path d="M1 5H9M5 1V9" />}
            {i === 2 && <path d="M1 1L9 9M9 1L1 9" />}
          </svg>
        </button>
      ))}
    </div>
  </header>
);

const MenuBar = () => (
  <nav className="flex h-[19px] shrink-0 items-center border-b border-[#dcd9d4] pl-[3px]">
    {MENUS.map((menu) => (
      <button key={menu} className="px-[7px] leading-4 hover:bg-white">
        <span className="underline underline-offset-2">{menu[0]}</span>
        {menu.slice(1)}
      </button>
    ))}
  </nav>
);

const FileToolbar = () => (
  <div className="flex h-[39px] shrink-0 items-center border-b border-[#b5b2ac] bg-linear-to-b from-[#f7f5f2] to-[#edeae5]">
    <Handle first />
    <ToolButton label="Neu"><NewIcon /></ToolButton>
    <ToolButton label="Öffnen"><OpenIcon /></ToolButton>
    <ToolButton label="Speichern"><SaveIcon /></ToolButton>
    <ToolButton label="Drucken"><PrintIcon /></ToolButton>
    <Sep />
    <ToolButton label="Ausschneiden"><CutIcon /></ToolButton>
    <ToolButton label="Kopieren"><CopyIcon /></ToolButton>
    <ToolButton label="Einfügen"><PasteIcon /></ToolButton>
    <Sep />
    <ToolButton label="Rückgängig"><UndoIcon /></ToolButton>
    <Caret dim label="Rückgängig-Liste" />
    <ToolButton label="Wiederholen"><RedoIcon /></ToolButton>
    <Caret dim label="Wiederholen-Liste" />
    <Sep />
    <ToolButton label="Aktualisieren"><RefreshIcon /></ToolButton>
    <Sep />
    <ToolButton label="Direkthilfe"><WhatsThisIcon /></ToolButton>
    <Handle />
    <div className="relative flex h-6 w-[172px] items-center rounded-[3px] border border-[#aaa7a1] bg-linear-to-b from-white to-[#edebe7]">
      <svg width="14" height="14" viewBox="0 0 14 14" className="pointer-events-none absolute left-[7px]" aria-hidden="true">
        <circle cx="7" cy="7" r="6" fill="#3f9a1b" stroke="#1f5a0a" />
        <path d="M1 5L7 7L13 4M2 10L8 9.500L12 10" stroke="#154506" fill="none" />
      </svg>
      <select aria-label="Arbeitsbereich" className="h-full w-full appearance-none bg-transparent pl-6 text-[12px] outline-none">
        <option>Mesh Design</option>
      </select>
      <svg width="8" height="5" viewBox="0 0 8 5" className="pointer-events-none absolute right-[7px]" aria-hidden="true">
        <path d="M0 0H8L4 5Z" fill="#555" />
      </svg>
    </div>
    <Handle />
    <ToolButton label="Makro aufzeichnen"><RecordIcon /></ToolButton>
    <ToolButton label="Aufzeichnung stoppen"><StopIcon /></ToolButton>
    <ToolButton label="Makros"><EditIcon /></ToolButton>
    <ToolButton label="Makro ausführen"><PlayIcon /></ToolButton>
  </div>
);

const ViewToolbar = () => (
  <div className="flex h-[39px] shrink-0 items-center border-b border-[#b5b2ac] bg-linear-to-b from-[#f7f5f2] to-[#edeae5]">
    <Handle first />
    <ToolButton label="Alles anzeigen"><FitAllIcon /></ToolButton>
    <ToolButton label="Auswahl anzeigen"><FitSelectionIcon /></ToolButton>
    <ToolButton label="Zeichnungsstil"><DrawStyleIcon /></ToolButton>
    <Caret label="Zeichnungsstile" />
    <Sep />
    <ToolButton label="Isometrisch"><IsoIcon /></ToolButton>
    <Sep />
    <ToolButton label="Vorne"><CubeIcon face="front" /></ToolButton>
    <ToolButton label="Oben"><CubeIcon face="top" /></ToolButton>
    <ToolButton label="Rechts"><CubeIcon face="right" /></ToolButton>
    <Sep />
    <ToolButton label="Hinten"><CubeIcon face="rear" /></ToolButton>
    <ToolButton label="Unten"><CubeIcon face="bottom" /></ToolButton>
    <ToolButton label="Links"><CubeIcon face="left" /></ToolButton>
    <Sep />
    <ToolButton label="Abstand messen"><RulerIcon /></ToolButton>
    <Handle />
    <ToolButton label="Part erstellen"><PartIcon /></ToolButton>
    <ToolButton label="Gruppe erstellen"><FolderIcon /></ToolButton>
    <Handle />
    <ToolButton label="Netz aus Form"><MeshConvertIcon /></ToolButton>
    <ToolButton label="Form aus Netz"><MeshConvertIcon gray /></ToolButton>
    <Sep />
    <ToolButton label="Netz schneiden"><MeshCutIcon /></ToolButton>
    <ToolButton label="Netz trimmen"><MeshPlaneIcon /></ToolButton>
  </div>
);

const ScrollBar = () => (
  <div className="flex w-[15px] shrink-0 flex-col border-l border-[#b5b2ac] bg-[#e3e2df]">
    <button aria-label="Nach oben" className="flex h-[14px] items-center justify-center border-b border-[#b5b2ac] bg-[#f8f7f5]">
      <svg width="8" height="4" viewBox="0 0 8 4" aria-hidden="true"><path d="M0 4H8L4 0Z" fill="#444" /></svg>
    </button>
    <div className="h-[38%] border-b border-[#b5b2ac] bg-linear-to-r from-[#f1f0ee] to-white" />
    <div className="flex-1" />
    <button aria-label="Nach unten" className="flex h-[14px] items-center justify-center border-t border-[#b5b2ac] bg-[#f8f7f5]">
      <svg width="8" height="4" viewBox="0 0 8 4" aria-hidden="true"><path d="M0 0H8L4 4Z" fill="#444" /></svg>
    </button>
  </div>
);

const TreeRow = ({ item }) => (
  <li className={`flex h-[18px] items-center ${INDENTS[item.level]}`}>
    <span className="flex w-5 items-center">
      {item.open && (
        <svg width="10" height="6" viewBox="0 0 10 6" aria-hidden="true">
          <path d="M0 0H10L5 5Z" fill="#3c3c3c" />
        </svg>
      )}
    </span>
    <TreeIcon name={item.icon} />
    <span className={`pl-1.5 leading-4 ${item.bold ? "font-bold" : ""} ${item.hidden ? "text-[#b9b9b9]" : ""}`}>
      {item.label}
    </span>
  </li>
);

const ComboView = () => {
  const [tab, setTab] = useState("Modell");
  const [propTab, setPropTab] = useState("Daten");

  return (
    <aside className="flex w-[30%] shrink-0 flex-col">
      <div className="flex h-5 items-center justify-between pl-1 pr-0.5">
        <h2 className="leading-4">Combo-Ansicht</h2>
        <div className="flex gap-[3px]">
          <button aria-label="Andocken" className="flex size-3 items-center justify-center rounded-[3px] border border-[#666]">
            <svg width="8" height="8" viewBox="0 0 8 8" fill="none" stroke="#555" aria-hidden="true">
              <path d="M3 3V1H7V5H5M1 3H5V7H1Z" />
            </svg>
          </button>
          <button aria-label="Ansicht schließen" className="flex size-3 items-center justify-center rounded-[3px] border border-[#666]">
            <svg width="8" height="8" viewBox="0 0 8 8" stroke="#555" strokeWidth="2" aria-hidden="true">
              <path d="M1 1L7 7M7 1L1 7" />
            </svg>
          </button>
        </div>
      </div>

      <div className="flex h-[25px] items-end">
        {["Modell", "Aufgaben"].map((name) => (
          <button
            key={name}
            onClick={() => setTab(name)}
            className={
              tab === name
                ? "h-[25px] rounded-t-[3px] border border-b-0 border-[#b0ada7] bg-[#fcfbfa] px-[11px] leading-4"
                : "h-[23px] rounded-t-[3px] border border-b-0 border-[#b0ada7] bg-[#e9e7e4] px-[11px] leading-4"
            }
          >
            {name}
          </button>
        ))}
      </div>

      <div className="flex min-h-0 flex-1 flex-col border border-[#a9a6a0] bg-[#fdfbf9] px-px pt-px">
        <div className="flex min-h-0 flex-6 border border-[#b0ada7] bg-white">
          <div className="min-w-0 flex-1 overflow-hidden">
            <div className="flex h-[19px] bg-[#eeebe8]">
              <div className="flex w-2/5 items-center border-b border-[#b5b2ac] bg-linear-to-b from-[#f9f8f6] to-[#eeecea] pl-0.5 leading-4">
                Bezeichnungen &amp; Eigenschaften
              </div>
            </div>
            <p className="pl-[3px] leading-[15px]">Applikation</p>
            <ul>
              {TREE.map((item) => (
                <TreeRow key={item.label} item={item} />
              ))}
            </ul>
          </div>
          <ScrollBar />
        </div>

        <div className="flex h-[5px] items-center justify-center">
          <div className="w-5 border-t-2 border-dotted border-[#c5c2bc]" />
        </div>

        <div className="flex min-h-0 flex-7 flex-col">
          <div className="flex min-h-0 flex-1 border border-[#b0ada7] p-px">
            <div className="flex flex-1 flex-col border border-[#b0ada7] bg-white">
              <table className="w-full table-fixed border-collapse">
                <thead>
                  <tr className="h-[19px] border-b border-[#b5b2ac] bg-linear-to-b from-[#faf9f8] to-[#ebe9e6] text-left">
                    <th className="w-[99px] border-r border-[#cfccc6] pl-0.5 leading-4 font-normal">Eigenschaft</th>
                    <th className="pl-0.5 leading-4 font-normal">Wert</th>
                  </tr>
                </thead>
              </table>
            </div>
          </div>
          <div className="flex h-[25px] items-start">
            {["Ansicht", "Daten"].map((name) => (
              <button
                key={name}
                onClick={() => setPropTab(name)}
                className={
                  propTab === name
                    ? "h-6 rounded-b-[3px] border border-t-0 border-[#b0ada7] bg-white px-[11px] leading-4"
                    : "h-[22px] rounded-b-[3px] border border-t-0 border-[#b0ada7] bg-[#e9e7e4] px-[11px] leading-4"
                }
              >
                {name}
              </button>
            ))}
          </div>
        </div>
      </div>
    </aside>
  );
};

const DocumentTabs = () => {
  const [active, setActive] = useState("Holder101 : 1");

  return (
    <div className="flex h-[31px] shrink-0 items-start border-t border-[#f7f5f2]">
      {["Startseite", "Holder103 : 1*", "Holder101 : 1"].map((name) => (
        <div
          key={name}
          className={
            active === name
              ? "flex h-[30px] items-center rounded-b-[3px] border border-t-0 border-[#b0ada7] bg-[#f7f5f2] pr-4 pl-[11px]"
              : "flex h-7 items-center rounded-b-[3px] border border-[#b9b6b0] bg-[#dcdad5] pr-4 pl-[11px]"
          }
        >
          <button onClick={() => setActive(name)} className="flex items-center gap-1 pr-[7px] leading-4">
            <DocTabIcon />
            {name}
          </button>
          <button aria-label={`${name} schließen`}>
            <CloseX />
          </button>
        </div>
      ))}
      <div className="h-px flex-1 bg-[#b9b6b0]" />
    </div>
  );
};

const StatusBar = () => (
  <footer className="flex h-[30px] shrink-0 items-center justify-between pt-0.5 pl-1.5">
    <p className="leading-4">Preselected: Hole001 - Holder101.Hole001.Edge93 (26.25, 0.544156, 4.18446)</p>
    <div className="flex items-center">
      <button className="flex items-center gap-0.5 leading-4">
        <svg width="16" height="16" viewBox="0 0 16 16" fill="none" aria-hidden="true">
          <path d="M2 5Q5 1 10 3M14 11Q11 15 5 14" stroke="#8b8b8b" strokeWidth="2.500" />
          <circle cx="12.500" cy="4" r="3" fill="#333" />
          <circle cx="3.500" cy="12.500" r="3" fill="#333" />
        </svg>
        Gesture
        <svg width="6" height="4" viewBox="0 0 6 4" aria-hidden="true">
          <path d="M0 0H6L3 4Z" fill="#444" />
        </svg>
      </button>
      <span className="px-3 leading-4">142,99 mm x 93,04 mm</span>
      <svg width="13" height="24" viewBox="0 0 13 24" aria-hidden="true">
        <path d="M10 12H11M7 15H11M4 18H11M1 21H11" stroke="#b5b2ac" strokeDasharray="1 2" />
      </svg>
    </div>
  </footer>
);

const App = () => {
  return (
    <div className="relative flex h-screen flex-col overflow-hidden rounded-t-[4px] border border-[#8c8c8c] bg-[#edebe6] font-['DejaVu_Sans',sans-serif] text-[12px] text-[#1a1a1a]">
      <TitleBar />
      <div className="flex min-h-0 flex-1 flex-col border-x-2 border-b-2 border-[#d5d3cf]">
        <MenuBar />
        <FileToolbar />
        <ViewToolbar />
        <div className="flex min-h-0 flex-1">
          <ComboView />
          <div className="flex w-1.5 shrink-0 items-center justify-center">
            <div className="h-5 border-l-2 border-dotted border-[#c5c2bc]" />
          </div>
          <main className="flex min-w-0 flex-1 flex-col">
            <div className="relative min-h-0 flex-1 bg-linear-to-b from-[#333365] to-[#9797aa]">
              <View3D />
            </div>
            <DocumentTabs />
          </main>
        </div>
        <StatusBar />
      </div>

      {/* remote session badge that sticks out of the screen edge */}
      <svg width="18" height="80" viewBox="0 0 18 80" className="absolute right-0 top-[311px]" aria-hidden="true">
        <path d="M18 14Q2 20 1 42Q1 66 18 78Z" fill="#0c9ae8" />
        <rect x="2" y="1" width="28" height="31" rx="10" fill="#fff" />
        <path d="M18 9Q14 9 14 13H18M18 18Q14 18 14 23H18" fill="#0c9ae8" />
      </svg>
    </div>
  );
};

export default App;
